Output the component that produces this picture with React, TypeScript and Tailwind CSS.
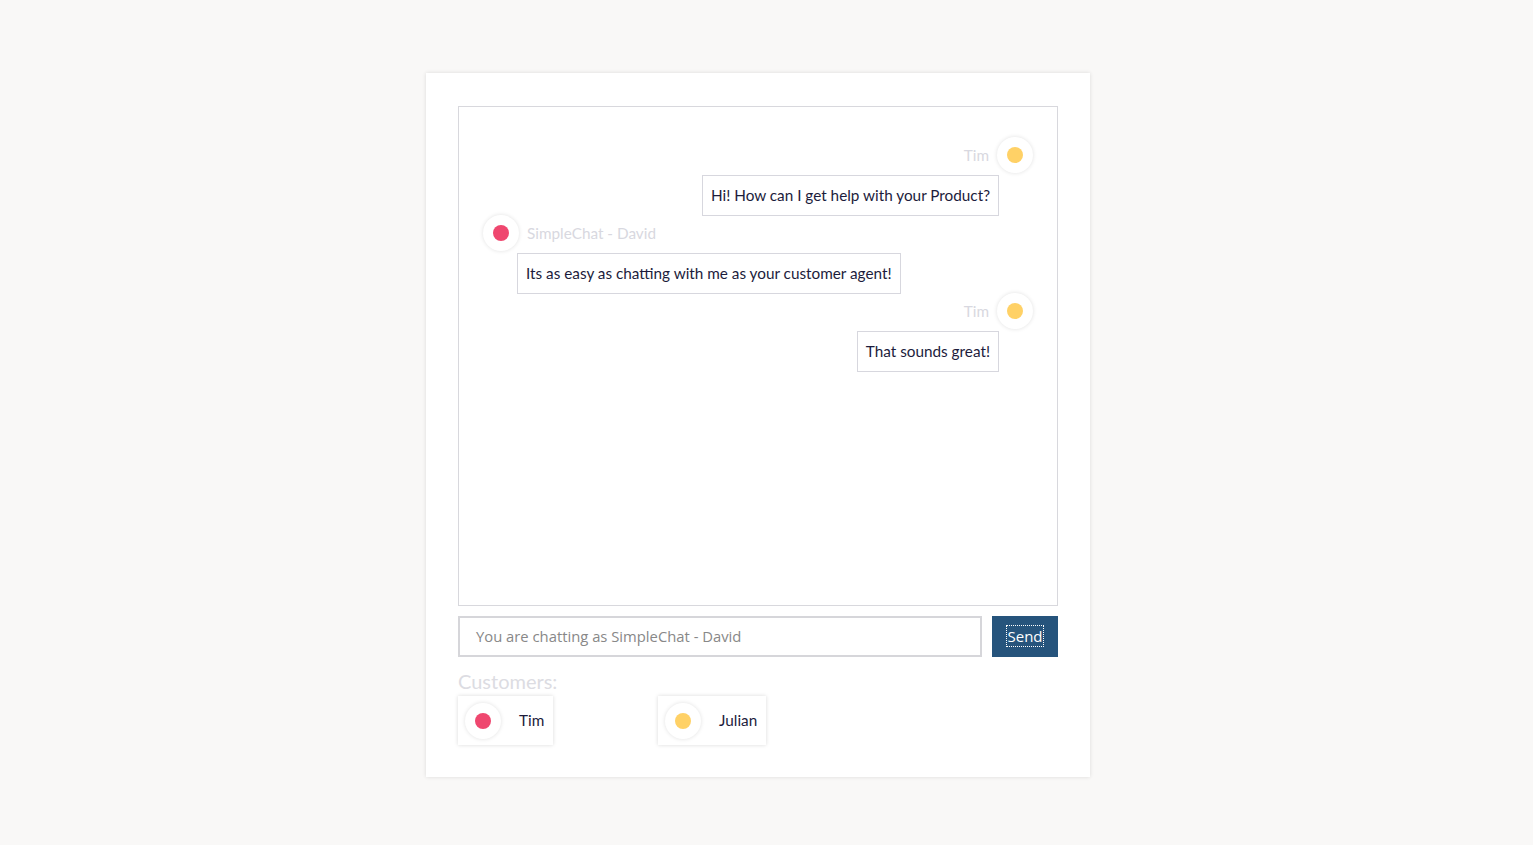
import React from "react";

type Msg = { from: string; text: string; color: string; mine: boolean };

const messages: Msg[] = [
  { from: "Tim", text: "Hi! How can I get help with your Product?", color: "bg-[#ffd166]", mine: false },
  { from: "SimpleChat - David", text: "Its as easy as chatting with me as your customer agent!", color: "bg-[#ef476f]", mine: true },
  { from: "Tim", text: "That sounds great!", color: "bg-[#ffd166]", mine: false },
];

const customers = [
  { name: "Tim", color: "bg-[#ef476f]" },
  { name: "Julian", color: "bg-[#ffd166]" },
];

const Avatar = ({ color }: { color: string }) => (
  <div className="flex h-9 w-9 shrink-0 items-center justify-center rounded-full bg-white shadow-[0_0_4px_rgba(0,0,0,0.12)]">
    <div className={`h-4 w-4 rounded-full ${color}`} />
  </div>
);

const Message = ({ msg }: { msg: Msg }) => {
  if (msg.mine) {
    return (
      <div className="-mt-px flex flex-col items-start first:mt-0">
        <div className="flex h-9 items-center gap-2">
          <Avatar color={msg.color} />
          <span className="text-[15.3px] text-[#d8d8e0]">{msg.from}</span>
        </div>
        <div className="mt-[2px] ml-[34px] flex h-[41px] items-center border border-[#d7d7de] px-2 text-[15.3px] text-[#1c1c3c]">
          {msg.text}
        </div>
      </div>
    );
  }
  return (
    <div className="-mt-px flex flex-col items-end first:mt-0">
      <div className="flex h-9 items-center gap-2">
        <span className="text-[15.3px] text-[#d8d8e0]">{msg.from}</span>
        <Avatar color={msg.color} />
      </div>
      <div className="mt-[2px] mr-[34px] flex h-[41px] items-center border border-[#d7d7de] px-2 text-[15.3px] text-[#1c1c3c]">
        {msg.text}
      </div>
    </div>
  );
};

export default function App() {
  return (
    <div className="flex min-h-[845px] w-full items-start justify-center bg-[#f9f8f7] pr-[17px] pt-[73px] font-['Lato',sans-serif]">
      <div className="w-[664px] bg-white px-8 pb-8 pt-[33px] shadow-[0_0_4px_rgba(0,0,0,0.12)]">
        <div className="flex h-[500px] w-[600px] flex-col border border-[#d8d8dd] px-6 pt-[30px]">
          {messages.map((m, i) => (
            <Message key={i} msg={m} />
          ))}
        </div>

        <div className="mt-[10px] flex gap-[10px]">
          <div className="flex h-[41px] flex-1 items-center border-2 border-[#d6d6da] px-4 font-['Open_Sans',sans-serif] text-[14.8px] text-[#888]">
            You are chatting as SimpleChat - David
          </div>
          <button className="h-[41px] w-[66px] bg-[#26547c] font-['Open_Sans',sans-serif] text-[15px] text-white">
            <span className="outline-1 outline-dotted outline-white">Send</span>
          </button>
        </div>

        <div className="mt-[12px] text-[20px] leading-[24px] text-[#dcdce2]">Customers:</div>
        <div className="mt-[3px] grid grid-cols-3">
          {customers.map((c) => (
            <div key={c.name} className="flex">
              <div className="flex h-[49px] items-center gap-[18px] bg-white pl-[7px] pr-[9px] shadow-[0_0_4px_rgba(0,0,0,0.15)]">
                <Avatar color={c.color} />
                <span className="text-[15.3px] text-[#1c1c3c]">{c.name}</span>
              </div>
            </div>
          ))}
        </div>
      </div>
    </div>
  );
}
